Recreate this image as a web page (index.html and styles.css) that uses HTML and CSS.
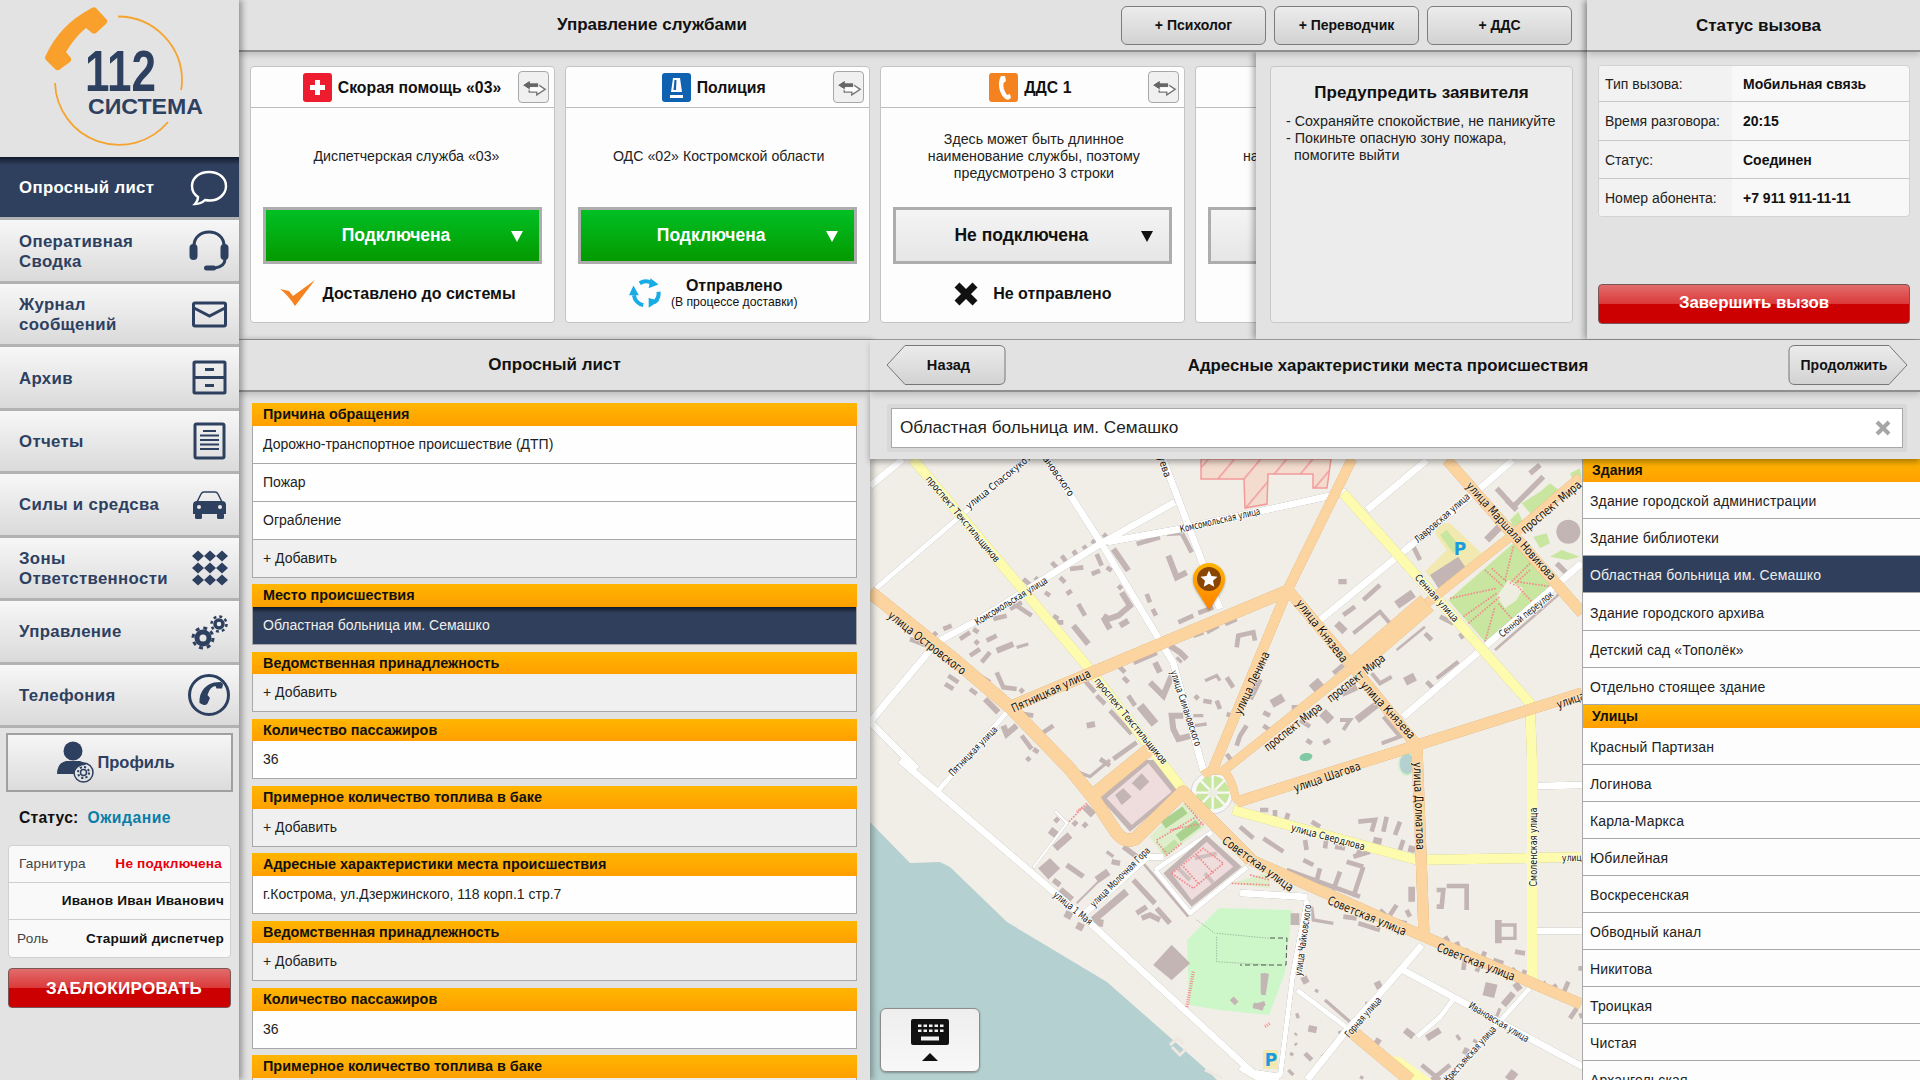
FILE: index.html
```html
<!DOCTYPE html>
<html lang="ru">
<head>
<meta charset="utf-8">
<title>Система 112</title>
<link rel="stylesheet" href="styles.css">
</head>
<body>
<aside class="sidebar">
  <div class="logo">
    <svg class="logo-svg" width="239" height="155" viewBox="0 0 239 155">
      <path class="logo-arc" d="M118 16.5A64 64 0 0 1 182 82Q182 86 181 90"/>
      <path class="logo-arc" d="M168 122A64 64 0 0 1 55 83"/>
      <path class="logo-phone" d="M96 8L107 20Q108 22 106 24L96 33Q94 34 92 33L86 28Q75 37 66 52L71 58Q72 60 70 62L59 70Q57 71 55 69L46 60Q44 58 46 55Q60 25 90 9Q94 6 96 8Z"/>
      <text class="logo-112" x="85" y="91" textLength="71" lengthAdjust="spacingAndGlyphs">112</text>
      <text class="logo-sys" x="88" y="114" textLength="115" lengthAdjust="spacingAndGlyphs">СИСТЕМА</text>
    </svg>
  </div>
  <nav class="nav">
    <a class="nav-item active"><span>Опросный лист</span>
      <svg class="nav-ic" viewBox="0 0 44 44"><path class="ic-white" d="M22 6C12 6 5 12 5 20C5 25 8 29 11 31C11 34 10 36 8 38C13 38 16 36 18 34C20 34.500 21 34.500 23 34.500C32 34.500 39 28 39 20C39 12 32 6 22 6Z"/></svg></a>
    <a class="nav-item"><span>Оперативная<br>Сводка</span>
      <svg class="nav-ic" viewBox="0 0 44 44"><path class="ic-line" d="M7 23V17C7 8 14 3 22 3C30 3 37 8 37 17V23"/><rect class="ic-fill" x="2.500" y="15" width="8" height="16" rx="4"/><rect class="ic-fill" x="33.500" y="15" width="8" height="16" rx="4"/><path class="ic-line" d="M38 30C38 36 34 38 28 39"/><rect class="ic-fill" x="17" y="36.500" width="12" height="5" rx="2.500"/></svg></a>
    <a class="nav-item"><span>Журнал<br>сообщений</span>
      <svg class="nav-ic" viewBox="0 0 44 44"><rect class="ic-line" x="6.500" y="10" width="32" height="23" rx="1.500"/><path class="ic-line" d="M7 15L22.500 23L38 15"/></svg></a>
    <a class="nav-item"><span>Архив</span>
      <svg class="nav-ic" viewBox="0 0 44 44"><rect class="ic-line" x="7" y="6" width="31" height="31" rx="1"/><path class="ic-line" d="M7 21.500H38M18 13.500H27M18 29.500H27"/></svg></a>
    <a class="nav-item"><span>Отчеты</span>
      <svg class="nav-ic" viewBox="0 0 44 44"><rect class="ic-line" x="8" y="5" width="29" height="34" rx="1.500"/><path class="ic-line thin" d="M16 12H29M13 16.500H32M13 21H32M13 25.500H32M13 30H32"/></svg></a>
    <a class="nav-item"><span>Силы и средсва</span>
      <svg class="nav-ic" viewBox="0 0 44 44"><path class="ic-thin" d="M10 19L14 11Q15 9 17 9H28Q30 9 31 11L35 19"/><path class="ic-fill" d="M6 22Q6 18 10 18H35Q39 18 39 22V31H6Z"/><rect class="ic-fill" x="8" y="30" width="7" height="6" rx="1.500"/><rect class="ic-fill" x="30" y="30" width="7" height="6" rx="1.500"/><circle class="ic-hole" cx="12" cy="24" r="2"/><circle class="ic-hole" cx="33" cy="24" r="2"/></svg></a>
    <a class="nav-item"><span>Зоны<br>Ответственности</span>
      <svg class="nav-ic" viewBox="0 0 44 44"><path class="ic-fill" d="M5 10l6-5.500 6 5.500-6 5.500zM17 10l6-5.500 6 5.500-6 5.500zM29 10l6-5.500 6 5.500-6 5.500zM5 22l6-5.500 6 5.500-6 5.500zM17 22l6-5.500 6 5.500-6 5.500zM29 22l6-5.500 6 5.500-6 5.500zM5 34l6-5.500 6 5.500-6 5.500zM17 34l6-5.500 6 5.500-6 5.500zM29 34l6-5.500 6 5.500-6 5.500z"/></svg></a>
    <a class="nav-item"><span>Управление</span>
      <svg class="nav-ic" viewBox="0 0 44 44"><circle class="ic-ring" cx="16" cy="28" r="6"/><circle class="ic-teeth" cx="16" cy="28" r="10" stroke-dasharray="3.900 3.950"/><circle class="ic-ring small" cx="32" cy="14" r="4"/><circle class="ic-teeth small" cx="32" cy="14" r="7.500" stroke-dasharray="2.950 2.950"/></svg></a>
    <a class="nav-item"><span>Телефония</span>
      <svg class="nav-ic wide" viewBox="0 0 44 44"><circle class="ic-line" cx="22" cy="22" r="19.500"/><path class="ic-fill" d="M27 9.500L33.500 9Q36 9.500 36 12L35 15.500L29.500 15.500L28.500 13Q23 13.500 20.500 22L23 25L20.500 30.500Q19 32.500 16.500 32L12.500 30Q12 21 17 15.500Q21 11 27 9.500Z"/></svg></a>
  </nav>
  <div class="side-bottom">
    <button class="profile-btn">
      <svg class="profile-ic" width="38" height="42" viewBox="0 0 38 42"><circle class="ic-fill" cx="17" cy="10" r="9.500"/><path class="ic-fill" d="M1 33Q1 22 10 20H24Q28 21 30 24Q20 24 18 33Z"/><circle class="ic-thin" cx="27.500" cy="31.500" r="9.500"/><circle class="ic-ring tiny" cx="27.500" cy="31.500" r="3"/><circle class="ic-teeth tiny" cx="27.500" cy="31.500" r="5.500" stroke-dasharray="2.150 2.150"/></svg>
      <span>Профиль</span>
    </button>
    <div class="user-status"><b>Статус:</b><span>Ожидание</span></div>
    <div class="info-table">
      <div class="info-row"><span class="info-l">Гарнитура</span><b class="red">Не подключена</b></div>
      <div class="info-row"><span class="info-l"></span><b>Иванов Иван Иванович</b></div>
      <div class="info-row"><span class="info-l r">Роль</span><b>Старший диспетчер</b></div>
    </div>
    <button class="block-btn gloss">ЗАБЛОКИРОВАТЬ</button>
  </div>
</aside>

<main class="main">
  <section class="top">
    <div class="services">
      <header class="head">
        <h2 class="head-title services-title">Управление службами</h2>
        <div class="head-btns">
          <button class="plus-btn">+ Психолог</button>
          <button class="plus-btn">+ Переводчик</button>
          <button class="plus-btn">+ ДДС</button>
        </div>
      </header>
      <div class="cards">
        <article class="card">
          <div class="card-head">
            <svg class="svc-ic" viewBox="0 0 29 29"><rect class="i-red" width="29" height="29" rx="3"/><path class="i-white" d="M12 7h5v5h5v5h-5v5h-5v-5H7v-5h5z"/></svg>
            <h3>Скорая помощь «03»</h3>
            <button class="swap"><svg viewBox="0 0 31 32" width="29" height="30"><path class="sw-o" d="M11 15.500H19V12.500L28 18.500L19 24.500V21.500H11Z"/><path class="sw-d" d="M3.500 14L12 8.500V11.500H21V16.500H12V19.500Z"/></svg></button>
          </div>
          <p class="card-desc first">Диспетчерская служба «03»</p>
          <button class="conn on"><span>Подключена</span><i class="tri"></i></button>
          <div class="deliv first">
            <svg class="d-check" width="36" height="27" viewBox="0 0 36 27"><path class="i-orange" d="M0 9L9 11L13 16L35 0L15 26Q8 15 0 9Z"/></svg>
            <b>Доставлено до системы</b>
          </div>
        </article>
        <article class="card">
          <div class="card-head shifted">
            <svg class="svc-ic" viewBox="0 0 29 29"><rect class="i-blue" width="29" height="29" rx="3"/><path class="i-white" d="M11 5H18L20 19H9ZM8 22H21V25H8Z"/><path class="i-blue" d="M12.500 7H14.500L14 17H11.500Z"/></svg>
            <h3>Полиция</h3>
            <button class="swap"><svg viewBox="0 0 31 32" width="29" height="30"><path class="sw-o" d="M11 15.500H19V12.500L28 18.500L19 24.500V21.500H11Z"/><path class="sw-d" d="M3.500 14L12 8.500V11.500H21V16.500H12V19.500Z"/></svg></button>
          </div>
          <p class="card-desc">ОДС «02» Костромской области</p>
          <button class="conn on"><span>Подключена</span><i class="tri"></i></button>
          <div class="deliv second">
            <svg width="34" height="31" viewBox="0 0 38 34"><path class="i-cyc" d="M12 5.500A13 13 0 0 1 25 5M33 15A13 13 0 0 1 28 27M16 30A13 13 0 0 1 5.500 19"/><path class="i-cyan" d="M24 0L33 7L22 11ZM34 25L22 33L22 22ZM0 19L5 8L11 19Z"/></svg>
            <div class="d-two"><b>Отправлено</b><small>(В процессе доставки)</small></div>
          </div>
        </article>
        <article class="card">
          <div class="card-head narrow">
            <svg class="svc-ic" viewBox="0 0 29 29"><rect class="i-orange" width="29" height="29" rx="3"/><path class="i-white" d="M12 3L16 3L17 8L14.500 10Q13.500 15 18 22L21 21L22 25L19 27Q14 26 11 18Q8.500 9 12 3Z"/></svg>
            <h3>ДДС 1</h3>
            <button class="swap"><svg viewBox="0 0 31 32" width="29" height="30"><path class="sw-o" d="M11 15.500H19V12.500L28 18.500L19 24.500V21.500H11Z"/><path class="sw-d" d="M3.500 14L12 8.500V11.500H21V16.500H12V19.500Z"/></svg></button>
          </div>
          <p class="card-desc">Здесь может быть длинное<br>наименование службы, поэтому<br>предусмотрено 3 строки</p>
          <button class="conn off"><span>Не подключена</span><i class="tri"></i></button>
          <div class="deliv">
            <svg width="26" height="26" viewBox="0 0 26 26"><path class="i-x" d="M4 4L22 22M22 4L4 22"/></svg>
            <b class="d-no">Не отправлено</b>
          </div>
        </article>
        <article class="card">
          <div class="card-head"></div>
          <p class="card-desc">Здесь может быть длинное<br>наименование службы, поэтому<br>предусмотрено 3 строки</p>
          <button class="conn off"></button>
        </article>
      </div>
      <aside class="warn">
        <div class="warn-box">
          <h3>Предупредить заявителя</h3>
          <p>- Сохраняйте спокойствие, не паникуйте<br>- Покиньте опасную зону пожара,<br><span class="warn-ind">помогите выйти</span></p>
        </div>
      </aside>
    </div>
    <div class="call">
      <header class="head call-head"><h2 class="head-title">Статус вызова</h2></header>
      <div class="call-body">
        <dl class="call-table">
          <dt>Тип вызова:</dt><dd>Мобильная связь</dd>
          <dt>Время разговора:</dt><dd>20:15</dd>
          <dt>Статус:</dt><dd>Соединен</dd>
          <dt>Номер абонента:</dt><dd>+7 911 911-11-11</dd>
        </dl>
        <button class="end-btn gloss">Завершить вызов</button>
      </div>
    </div>
  </section>

  <section class="bottom">
    <div class="survey">
      <header class="head"><h2 class="head-title">Опросный лист</h2></header>
      <div class="form">
        <div class="fs"><h4 class="orange">Причина обращения</h4><div class="fr">Дорожно-транспортное происшествие (ДТП)</div><div class="fr">Пожар</div><div class="fr">Ограбление</div><div class="fr add">+ Добавить</div></div>
        <div class="fs"><h4 class="orange">Место происшествия</h4><div class="fr sel">Областная больница им. Семашко</div></div>
        <div class="fs"><h4 class="orange">Ведомственная принадлежность</h4><div class="fr add">+ Добавить</div></div>
        <div class="fs"><h4 class="orange">Количество пассажиров</h4><div class="fr">36</div></div>
        <div class="fs"><h4 class="orange">Примерное количество топлива в баке</h4><div class="fr add">+ Добавить</div></div>
        <div class="fs"><h4 class="orange">Адресные характеристики места происшествия</h4><div class="fr">г.Кострома, ул.Дзержинского, 118 корп.1 стр.7</div></div>
        <div class="fs"><h4 class="orange">Ведомственная принадлежность</h4><div class="fr add">+ Добавить</div></div>
        <div class="fs"><h4 class="orange">Количество пассажиров</h4><div class="fr">36</div></div>
        <div class="fs"><h4 class="orange">Примерное количество топлива в баке</h4><div class="fr add">+ Добавить</div></div>
      </div>
    </div>
    <div class="address">
      <header class="head addr-head">
        <button class="nav-btn back">
          <svg class="btn-shape" width="120" height="40" viewBox="0 0 120 40"><defs><linearGradient id="bg1" x1="0" y1="0" x2="0" y2="1"><stop offset="0" stop-color="#ececec"/><stop offset="1" stop-color="#d2d2d2"/></linearGradient></defs><path d="M19 .5H113Q119 .5 119 6V34Q119 39.500 113 39.500H19L1 20Z" fill="url(#bg1)" stroke="#777"/></svg>
          <span>Назад</span>
        </button>
        <h2 class="head-title addr-title">Адресные характеристики места происшествия</h2>
        <button class="nav-btn next">
          <svg class="btn-shape" width="120" height="40" viewBox="0 0 120 40"><path d="M101 .5H7Q1 .5 1 6V34Q1 39.500 7 39.500H101L119 20Z" fill="url(#bg1)" stroke="#777"/></svg>
          <span>Продолжить</span>
        </button>
      </header>
      <div class="search-band">
        <div class="search"><span>Областная больница им. Семашко</span>
          <svg width="16" height="16" viewBox="0 0 16 16"><path class="i-clear" d="M2 2L14 14M14 2L2 14"/></svg>
        </div>
      </div>
      <div class="addr-body">
        <div class="map">
          <svg class="map-svg" width="712" height="621" viewBox="870 459 712 621">
            <defs>
              <pattern id="hatch" width="20" height="20" patternUnits="userSpaceOnUse" patternTransform="rotate(-50)"><rect width="20" height="20" class="h-bg"/><rect width="20" height="1.500" class="h-ln"/></pattern>
            </defs>
            <rect class="m-land" x="870" y="459" width="712" height="621"/>
            <path class="m-water" d="M870 822L910 863L940 862L950 867L1007 922L1107 982L1207 1070L1217 1080H870Z"/>
            <path class="m-pier" d="M1170 1045L1178 1038L1183 1044M1172 1047L1180 1055L1186 1049M1205 1070L1222 1078"/>
            <path class="m-hatch" d="M1201 459V479H1244L1245 508L1267 504L1268 474H1313V488H1327L1331 459Z"/>
            <path class="m-park" d="M1219 908L1292 910L1285 973L1269 1015L1219 1010L1189 1005L1187 940Z"/>
            <ellipse class="m-teal" cx="1306" cy="757" rx="6.500" ry="4" transform="rotate(-10 1306 757)"/>
            <ellipse class="m-pond" cx="1407" cy="764" rx="8" ry="11"/>

            <!-- upper-right park and parking -->
            <g transform="translate(1300 460) scale(.33333)">
              <path class="m-green" d="M445 420L640 250L770 375L555 545Z M665 130L720 95L750 70L790 100L745 140L700 170Z M700 230L740 220L750 250L720 265Z M630 180L655 155L670 190L640 200Z M750 290L785 270L840 290L800 300Z M810 40L840 25L845 50L820 65Z"/>
              <path class="m-centre" d="M590 410L625 360L670 385L650 420L615 445Z"/>
              <path class="m-dots" d="M450 415L590 385M490 470L590 400M505 490L600 410M555 545L585 440M635 475L595 430M700 430L650 375M755 380L650 365M690 310L630 370M640 260L615 360M555 330L610 380M575 325L620 365M690 330L640 375"/>
              <path class="m-pale" d="M375 335L440 270L405 220L420 190L450 190L545 280L425 385Z"/>
              <path class="m-green" d="M420 225L440 210L480 260L460 280Z"/>
              <path class="m-bld" d="M390 345L475 290L495 320L415 385Z"/>
              <circle class="m-bld" cx="805" cy="215" r="36"/>
            </g>

            <!-- buildings, upper left -->
            <g class="m-b" transform="translate(870 459) scale(.33333)">
              <path stroke-width="14" d="M800 255L870 235M890 225L935 222L965 280M545 310L560 325M575 290L590 310M610 275L620 290M640 260L650 272M665 245L680 255M700 225L710 235M680 285L695 320M710 325L725 335M665 345L690 335M600 330L640 325M570 355L585 370M460 360L490 385M495 355L510 370M605 395L590 405M540 410L525 400M625 435L645 470M745 380L755 390M830 405L840 430M848 450L858 470M925 490L970 470M985 462L1030 445M970 530L1000 520M1010 520L1045 500M1065 495L1100 480M1100 565L1105 530L1150 520L1155 545M1070 655L1090 685M1040 725L1050 750M975 710L985 720M1000 725L1025 730M1070 765L1085 770M120 540L170 560M190 530L200 520M220 510L245 500M270 540L300 520M310 510L325 520M315 545L325 555M350 545L380 530M300 590L330 570M335 610L360 580M225 675L250 690M235 650L265 670M285 615L310 640M310 640L360 670M380 640L400 685L440 690M450 690L460 700M300 690L320 705M460 765L490 770M455 830L485 870M490 870L505 880M520 820L550 800M470 895L480 905M645 665L675 700M680 710L705 735M720 755L785 825M775 710L795 740M760 655L775 670M745 620L765 640M370 480L410 470M440 440L485 470M420 450L455 430M560 490L580 490M550 470L565 480M690 900L720 920M800 850L730 900M1180 760L1200 770M1180 800L1210 820M1265 745L1290 745M1130 800L1110 830L1100 860M1070 885L1095 920"/>
              <path stroke-width="18" d="M730 270L775 335M895 290L920 355L950 340M755 400L780 440L745 470L715 480L700 470M700 475L720 510M750 500L775 485M790 610L860 580M900 560L930 580L950 600M855 610L870 640M840 670L880 710L905 650M1170 660L1140 720M940 770L905 770L910 810L925 840L965 830M380 575L430 555M345 720L385 760M400 800L410 825L440 800M650 800L675 795M610 500L655 555"/>
              <path stroke-width="26" d="M1205 735L1240 715M810 740L855 795"/>
              <path stroke-width="10" d="M440 565L475 555M1005 665L1040 650L1050 665M970 770L1000 770M975 800L1010 795M920 595L935 610"/>
            </g>

            <!-- buildings, lower left -->
            <g class="m-b" transform="translate(870 760) scale(.33333)">
              <path stroke-width="10" d="M620 35L660 50L720 0M710 275L730 290"/>
              <path stroke-width="6" d="M620 430L690 360"/>
              <path stroke-width="8" d="M820 310L955 470"/>
              <path stroke-width="16" d="M555 175L565 185M610 185L620 195M640 190L650 200M760 260L800 290M725 305L750 310M550 360L570 375M790 360L855 430M800 460L830 440M815 475L840 465L870 480M860 445L900 490M590 315L640 350"/>
              <path stroke-width="22" d="M645 140L670 165M540 210L560 225M555 265L600 225M680 360L715 335M570 390L605 420M585 460L605 470M620 495L640 505M670 480L770 395M665 485L700 490"/>
              <path class="m-bld" d="M505 325L540 295L570 325L535 358ZM850 615L905 555L960 610L905 660Z"/>
              <path stroke-width="16" d="M1180 640L1180 700M1150 735L1180 745M1085 715L1100 730"/>
            </g>

            <!-- buildings, lower right -->
            <g class="m-b" transform="translate(1240 760) scale(.33333)">
              <path stroke-width="14" d="M355 185L405 180L395 215M440 170L430 215M480 185L465 225M490 240L480 270M0 200L40 235M70 235L130 275M60 150L85 150M105 150L105 175M145 160L135 190M215 185L240 200M195 240L200 270M260 230L255 265M285 260L315 265M340 290L390 275M360 270L350 290M190 300L220 315M140 330L360 410M370 320L340 410M320 305L370 320M240 325L225 380M300 335L280 390M620 378L680 378L680 450M590 390L610 390L605 440L590 440M615 530L625 545M650 545L655 560M680 565L670 630M735 575L710 635M760 600L790 610M825 575L855 580M855 630L850 645M815 625L830 640M950 675L930 690M985 665L970 700M1015 625L1035 625M1010 745L990 775M545 915L600 960M575 960L630 915M310 470L350 475M355 490L420 510M420 450L440 470M450 465L470 435M500 450L510 470M470 485L500 490"/>
              <path stroke-width="20" d="M400 240L425 245M505 265L525 270M515 380L515 425M775 480L775 550M820 700L790 735M825 670L840 690M190 650L200 670M205 805L230 810M670 870L690 880M405 840L420 850M495 810L520 830M560 835L600 810M375 735L400 735M410 665L420 685"/>
              <path stroke-width="10" d="M775 495L825 495L825 535L775 535M215 440L220 480L280 490M255 720L335 790M225 690L235 695M150 880L160 885M145 930L160 945M245 890L260 880M280 850L295 835M295 820L305 815M650 825L660 840M700 840L715 850M170 760L175 775M170 820L165 825M165 850L170 855M780 745L770 770M360 950L370 955M910 665L915 670M1020 760L1025 775"/>
              <path stroke-width="36" d="M755 670L745 710"/>
              <path stroke-width="26" d="M165 460L165 495M825 935L805 960"/>
              <path stroke-width="14" d="M80 640L70 705M40 740L75 730M195 880L215 900"/>
            </g>

            <!-- buildings, upper right -->
            <g class="m-b" transform="translate(1300 460) scale(.33333)">
              <path stroke-width="16" d="M590 85L640 140L690 90L730 50M720 15L690 40M650 150L620 120M770 310L800 340M115 365L140 365"/>
              <path stroke-width="22" d="M560 240L600 200M155 600L190 570M170 780L235 730M125 700L170 680M110 490L135 515"/>
              <path stroke-width="14" d="M190 420L240 375M130 465L165 440M375 520L395 540M420 470L460 490M480 520L490 535M100 640L130 615M380 665L400 685M20 840L35 850M70 850L90 840M0 780L30 800M340 260L360 300"/>
              <path stroke-width="26" d="M290 435L340 400M315 665L345 650"/>
              <path stroke-width="12" d="M160 520L240 455L270 490M215 640L240 670L275 650M410 655L475 605M120 780L150 780L130 810M245 850L300 830L250 770"/>
              <path stroke-width="8" d="M290 570L375 500M585 570L780 400"/>
              <path stroke-width="36" d="M40 665L70 700M90 760L70 780"/>
            </g>

            <!-- white streets -->
            <g id="wr">
              <path stroke-width="7" d="M1347 492L1180 529L1107 542M1175 502L1100 544L980 619L937 642L870 722L917 769M1047 459L1103 546L1163 646L1173 662L1203 769L1205 775M1163 459L1220 609M1403 717L1582 563M1320 620L1470 497L1513 460M1367 510L1427 460M1403 970L1583 1067M1422 945L1377 997L1347 1030L1307 1080M1240 893L1307 897M1538 786L1582 785M1537 931L1582 931M1083 915L1147 857L1163 857M900 760L1090 923L1253 1073L1280 1077M870 486L903 459M1240 1067L1257 1077L1277 1077"/>
              <path stroke-width="5" d="M873 591L1027 459M1007 712L937 792M1307 900L1293 973L1280 1077M1530 988L1447 1080M1297 990L1350 1030M1453 1000L1440 1017L1417 1037M1155 870L1190 913L1247 867M1155 870L1212 832"/>
              <path stroke-width="2.500" d="M1033 868L1067 823L1055 811"/>
            </g>
            <circle class="m-plaza" cx="1212" cy="793" r="21"/>
            <g transform="translate(870 760) scale(.33333)">
              <circle class="m-green" cx="1028" cy="98" r="50"/>
              <path class="m-spoke" d="M985 55L1070 140M1070 55L985 140M1028 40V155M970 98H1086"/>
              <circle class="m-centre" cx="1028" cy="98" r="15"/>
              <!-- plaza green block -->
              <path class="m-pale2" d="M838 230L945 125L1005 200L885 290Z"/>
              <path class="m-g2" stroke-width="26" d="M880 195L945 150M925 235L985 190"/>
              <path class="m-g3" stroke-width="20" d="M880 280L920 245"/>
              <path class="m-dots" d="M860 240L980 170M900 210L1000 190M860 245L890 280M945 130L1000 195M935 250L885 290"/>
              <!-- pink block -->
              <path class="m-bld" d="M880 340L1010 225L1115 320L965 440Z"/>
              <path class="m-pink" d="M905 340L1010 245L1090 320L965 420Z"/>
              <path class="m-in" stroke-width="12" d="M925 325L960 360M975 295L1040 280M1005 340L1030 370"/>
              <path class="m-dots" d="M905 340L1000 265L1060 310L970 385ZM940 320L985 370M980 285L1030 340"/>
              <path class="m-pale2" d="M1085 370L1200 335V385L1120 375Z"/>
              <path class="m-dots" d="M1085 370L1200 375M1140 345L1200 360"/>
              <!-- pink square -->
              <path class="m-bld" d="M690 115L820 0H870L925 95L780 215Z"/>
              <path class="m-pink" d="M710 115L835 10L905 95L785 195Z"/>
              <path class="m-bld" d="M735 105L760 85L785 110L755 135ZM785 70L815 40L838 65L810 92Z"/>
              <!-- stairs -->
              <path class="m-stair" stroke-width="10" stroke-dasharray="3 4" d="M970 635L950 745M1185 800L1200 790"/>
              <path class="m-stair" stroke-width="7" stroke-dasharray="3 3" d="M620 155L640 140"/>
              <path class="m-dots" d="M597 185L650 130"/>
              <path class="m-dash" d="M980 480L1035 520M1040 520L1200 535M1040 530V605L1200 615"/>
            </g>
            <path class="m-dash" d="M1270 938L1287 938L1286 965L1240 965"/>

            <!-- yellow streets -->
            <g id="yr">
              <path stroke-width="10" d="M913 459L1087 666L1183 790M1343 493L1530 703L1532 760L1532 980M1233 810L1417 860L1582 857"/>
            </g>
            <path class="m-yfill" d="M1386 1056L1400 1057L1432 1080H1412Z"/>

            <!-- orange streets -->
            <g id="or">
              <path stroke-width="13" d="M870 592L950 656L1010 707L1070 769L1095 800L1116 832Q1124 843 1135 839L1183 792L1251 860M1093 795L1152 747M1350 1030L1410 1080"/>
              <path stroke-width="12" d="M1010 707L1287 591"/>
              <path stroke-width="10" d="M1287 591L1352 459M1287 591L1213 769"/>
              <path stroke-width="11" d="M1447 460L1582 613M1288 590L1353 667L1410 737L1417 746L1424 935M1237 802L1582 693M1251 860L1416 933L1581 1004"/>
              <path stroke-width="9" d="M1580 477L1510 537L1427 603M1353 667L1223 771"/>
              <path stroke-width="20" d="M1427 603L1353 667"/>
              <path stroke-width="8" d="M1203 775Q1212 768 1225 772Q1232 780 1235 795Q1236 802 1243 800"/>
            </g>

            <g class="labels">
              <text transform="translate(963 519) rotate(50)" textLength="109" lengthAdjust="spacingAndGlyphs">проспект Текстильщиков</text>
              <text class="s" transform="translate(967 507) rotate(-39)" textLength="105" lengthAdjust="spacingAndGlyphs">улица Спасокукотского</text>
              <text class="e" transform="translate(1072 495) rotate(55)" textLength="95" lengthAdjust="spacingAndGlyphs">улица Симановского</text>
              <text class="e" transform="translate(1168 477) rotate(72)" textLength="60" lengthAdjust="spacingAndGlyphs">улица Зуева</text>
              <text transform="translate(1220 520) rotate(-13)" textLength="82" lengthAdjust="spacingAndGlyphs">Комсомольская улица</text>
              <text transform="translate(1011 601) rotate(-31.500)" textLength="83" lengthAdjust="spacingAndGlyphs">Комсомольская улица</text>
              <text class="b" transform="translate(927 643) rotate(38)" textLength="95" lengthAdjust="spacingAndGlyphs">улица Островского</text>
              <text class="b" transform="translate(1051 691) rotate(-25)" textLength="86" lengthAdjust="spacingAndGlyphs">Пятницкая улица</text>
              <text transform="translate(1131 721) rotate(50.500)" textLength="108" lengthAdjust="spacingAndGlyphs">проспект Текстильщиков</text>
              <text transform="translate(1186 708) rotate(71.500)" textLength="79" lengthAdjust="spacingAndGlyphs">улица Симановского</text>
              <text class="b" transform="translate(1252 683) rotate(-65)" textLength="68" lengthAdjust="spacingAndGlyphs">улица Ленина</text>
              <text class="b" transform="translate(1293 727) rotate(-38)" textLength="70" lengthAdjust="spacingAndGlyphs">проспект Мира</text>
              <text class="b" transform="translate(1356 678) rotate(-38)" textLength="70" lengthAdjust="spacingAndGlyphs">проспект Мира</text>
              <text class="b" transform="translate(1322 631) rotate(52)" textLength="76" lengthAdjust="spacingAndGlyphs">улица Князева</text>
              <text class="b" transform="translate(1388 710) rotate(47)" textLength="74" lengthAdjust="spacingAndGlyphs">улица Князева</text>
              <text transform="translate(1437 598) rotate(48)" textLength="60" lengthAdjust="spacingAndGlyphs">Сенная улица</text>
              <text transform="translate(1442 518) rotate(-41)" textLength="70" lengthAdjust="spacingAndGlyphs">Лавровская улица</text>
              <text class="b" transform="translate(1511 531) rotate(48)" textLength="127" lengthAdjust="spacingAndGlyphs">улица Маршала Новикова</text>
              <text class="b" transform="translate(1551 507) rotate(-40)" textLength="75" lengthAdjust="spacingAndGlyphs">проспект Мира</text>
              <text transform="translate(1526 614) rotate(-39)" textLength="67" lengthAdjust="spacingAndGlyphs">Сенной переулок</text>
              <text class="b s" transform="translate(1557 705) rotate(-19)" textLength="70" lengthAdjust="spacingAndGlyphs">улица Шагова</text>
              <text class="b" transform="translate(1327 777) rotate(-19)" textLength="70" lengthAdjust="spacingAndGlyphs">улица Шагова</text>
              <text class="b" transform="translate(1419 806) rotate(88)" textLength="88" lengthAdjust="spacingAndGlyphs">улица Долматова</text>
              <text transform="translate(1328 837) rotate(15)" textLength="76" lengthAdjust="spacingAndGlyphs">улица Свердлова</text>
              <text transform="translate(1533 847) rotate(-90)" textLength="79" lengthAdjust="spacingAndGlyphs">Смоленская улица</text>
              <text class="s" transform="translate(1562 858) rotate(-2)" textLength="70" lengthAdjust="spacingAndGlyphs">улица Свердлова</text>
              <text class="b" transform="translate(1258 864) rotate(36)" textLength="85" lengthAdjust="spacingAndGlyphs">Советская улица</text>
              <text class="b" transform="translate(1367 916) rotate(22.500)" textLength="84" lengthAdjust="spacingAndGlyphs">Советская улица</text>
              <text class="b" transform="translate(1476 962) rotate(21.500)" textLength="83" lengthAdjust="spacingAndGlyphs">Советская улица</text>
              <text transform="translate(1303 940) rotate(-82)" textLength="72" lengthAdjust="spacingAndGlyphs">улица Чайковского</text>
              <text transform="translate(1363 1017) rotate(-49)" textLength="50" lengthAdjust="spacingAndGlyphs">Горная улица</text>
              <text transform="translate(1499 1022) rotate(31)" textLength="68" lengthAdjust="spacingAndGlyphs">Ивановская улица</text>
              <text transform="translate(1470 1054) rotate(-48)" textLength="72" lengthAdjust="spacingAndGlyphs">Крестьянская улица</text>
              <text transform="translate(1073 908) rotate(39)" textLength="47" lengthAdjust="spacingAndGlyphs">улица 1 Мая</text>
              <text transform="translate(1120 877) rotate(-45)" textLength="80" lengthAdjust="spacingAndGlyphs">улица Молочная Гора</text>
              <text transform="translate(973 751) rotate(-46)" textLength="65" lengthAdjust="spacingAndGlyphs">Пятницкая улица</text>
            </g>
            <rect class="m-parkbg" x="1263" y="1050" width="15" height="19"/>
            <text class="m-p" x="1271" y="1066">P</text>
            <text class="m-p" x="1460" y="555">P</text>

            <!-- pin -->
            <g class="pin">
              <defs><linearGradient id="pinG" x1="0" y1="0" x2="0" y2="1"><stop offset="0" stop-color="#ffb400"/><stop offset="1" stop-color="#ff8200"/></linearGradient></defs>
              <path fill="url(#pinG)" d="M1209 610L1197 591Q1193 585 1193 579A16 16 0 0 1 1225 579Q1225 585 1221 591Z"/>
              <circle class="pin-in" cx="1209" cy="579" r="12"/>
              <path class="i-white" d="M1209 570.500L1211.500 576L1217.500 576.800L1213 580.800L1214.300 586.800L1209 583.800L1203.700 586.800L1205 580.800L1200.500 576.800L1206.500 576Z"/>
            </g>
          </svg>
          <button class="kbd-btn">
            <svg width="40" height="42" viewBox="0 0 40 42"><rect class="kb-b" x="1" y="0" width="38" height="26" rx="2"/><path class="kb-k" d="M8 5.500H11.500V8H8ZM13.500 5.500H17V8H13.500ZM19 5.500H22.500V8H19ZM24.500 5.500H28V8H24.500ZM30 5.500H33.500V8H30ZM8 10.500H11.500V13H8ZM13.500 10.500H17V13H13.500ZM19 10.500H22.500V13H19ZM24.500 10.500H28V13H24.500ZM30 10.500H33.500V13H30ZM11 17.500H29V21.500H11Z"/><path class="kb-t" d="M12 42L20 34L28 42Z"/></svg>
          </button>
        </div>
        <div class="list">
          <h4 class="orange">Здания</h4>
          <div class="li bld">Здание городской администрации</div>
          <div class="li bld">Здание библиотеки</div>
          <div class="li bld sel">Областная больница им. Семашко</div>
          <div class="li bld">Здание городского архива</div>
          <div class="li bld">Детский сад «Тополёк»</div>
          <div class="li bld">Отдельно стоящее здание</div>
          <h4 class="orange">Улицы</h4>
          <div class="li">Красный Партизан</div>
          <div class="li">Логинова</div>
          <div class="li">Карла-Маркса</div>
          <div class="li">Юбилейная</div>
          <div class="li">Воскресенская</div>
          <div class="li">Обводный канал</div>
          <div class="li">Никитова</div>
          <div class="li">Троицкая</div>
          <div class="li">Чистая</div>
          <div class="li">Архангельская</div>
        </div>
      </div>
    </div>
  </section>
</main>
</body>
</html>
```
FILE: styles.css
```css
* { box-sizing: border-box; }
html, body { margin: 0; padding: 0; }
body {
  width: 1920px; height: 1080px; overflow: hidden;
  display: flex;
  background: #e2e2e2;
  font-family: "Liberation Sans", Arial, sans-serif;
  color: #111;
}
button { font-family: inherit; cursor: pointer; padding: 0; }
h2, h3, h4, p, dl, dd, dt { margin: 0; }

/* Sidebar */
.sidebar { width: 239px; flex: none; height: 1080px; background: #e3e3e3; position: relative; z-index: 5; box-shadow: 3px 0 6px rgba(0,0,0,.35); display: flex; flex-direction: column; }
.logo { height: 157px; flex: none; }
.logo-svg { display: block; }
.logo-arc { fill: none; stroke: #f5a430; stroke-width: 1.8; }
.logo-phone { fill: #f9a02c; }
.logo-112 { font: bold 58px "Liberation Sans", sans-serif; fill: #2e4060; }
.logo-sys { font: bold 21.500px "Liberation Sans", sans-serif; fill: #2e4060; }

.nav { display: grid; grid-template-rows: repeat(9, 63.440px); flex: none; }
.nav-item { display: flex; align-items: center; justify-content: space-between; padding: 1px 8px 0 19px; background: linear-gradient(#f7f7f7, #dadada); border-bottom: 3px solid #b2b2b2; color: #2e4060; font-weight: bold; font-size: 16.800px; line-height: 20px; letter-spacing: .35px; }
.nav-item span { padding-top: 1px; }
.nav-item.active { background: linear-gradient(#131c2c 0, #2f405e 8px); color: #fff; border-bottom-color: #b2b2b2; }
.nav-ic { width: 44px; height: 44px; flex: none; }
.ic-white { fill: none; stroke: #fff; stroke-width: 2.400; }
.ic-line { fill: none; stroke: #2e4060; stroke-width: 3; }
.ic-line.thin { stroke-width: 2; }
.ic-thin { fill: none; stroke: #2e4060; stroke-width: 1.500; }
.ic-fill { fill: #2e4060; }
.ic-hole { fill: #e9e9e9; }
.ic-ring { fill: none; stroke: #2e4060; stroke-width: 5; }
.ic-ring.small { stroke-width: 3.500; }
.ic-ring.tiny { stroke-width: 1.500; }
.ic-teeth { fill: none; stroke: #2e4060; stroke-width: 3; }
.ic-teeth.small { stroke-width: 2.500; }
.ic-teeth.tiny { stroke-width: 2; }

.side-bottom { flex: 1; padding: 5px 6px 0; display: flex; flex-direction: column; }
.profile-btn { height: 59px; flex: none; display: flex; align-items: center; justify-content: center; gap: 3px; border: 2px solid #a0a0a0; background: linear-gradient(#f6f6f6, #dcdcdc); color: #2e4060; font-size: 16.500px; font-weight: bold; padding-right: 8px; }
.user-status { font-size: 15.700px; height: 53px; flex: none; display: flex; gap: 9px; padding-left: 13px; align-items: center; letter-spacing: .2px; }
.user-status span { color: #0a7ea8; font-weight: bold; letter-spacing: .5px; }
.info-table { margin: 0 2px; background: #f9f9f9; border: 1px solid #d0d0d0; border-radius: 4px; height: 113px; display: grid; grid-template-rows: repeat(3, 1fr); flex: none; }
.info-row { display: flex; align-items: center; justify-content: space-between; padding: 0 6px 0 10px; font-size: 13.600px; border-bottom: 1px solid #cfcfcf; }
.info-row:first-child { padding-right: 8px; }
.info-row:last-child { border-bottom: 0; }
.info-row b { letter-spacing: .2px; }
.info-l { color: #444; letter-spacing: .2px; }
.info-l.r { margin-left: -2px; }
.red { color: #e8000c; }
.gloss { background: linear-gradient(#e26c6c 0, #dc3a3a 49%, #cc0000 50%, #cc0000 100%); color: #fff; font-weight: bold; border: 1px solid #7a5555; border-radius: 4px; }
.block-btn { margin: 10px 2px 0; height: 40px; flex: none; font-size: 17px; letter-spacing: .3px; padding: 2px 0 0 9px; }

/* Main */
.main { flex: 1; height: 1080px; display: flex; flex-direction: column; min-width: 0; }
.top { height: 340px; flex: none; display: flex; border-bottom: 1px solid #9c9c9c; position: relative; z-index: 1; }
.services { flex: 1; min-width: 0; position: relative; overflow: hidden; background: #e2e2e2; }
.head { height: 52px; flex: none; background: #e2e2e2; border-bottom: 2px solid #8f8f8f; display: flex; align-items: center; justify-content: center; position: relative; z-index: 2; box-shadow: 0 3px 6px rgba(0,0,0,.16); }
.head-title { font-size: 17px; font-weight: bold; text-align: center; }
.services-title { flex: 1; padding-right: 56px; }
.call-head { padding-left: 10px; padding-top: 1px; }
.head-btns { display: flex; gap: 8px; padding-right: 15px; flex: none; }
.plus-btn { width: 145px; height: 39px; background: linear-gradient(#ececec, #d2d2d2); border: 1px solid #7c7c7c; border-radius: 6px; font-size: 14px; font-weight: bold; color: #111; }

.cards { display: flex; gap: 10.200px; padding: 14px 0 0 10.500px; }
.card { flex: none; width: 305px; height: 257px; background: #fdfdfd; border: 1px solid #c4c4c4; border-radius: 4px; display: flex; flex-direction: column; }
.card-head { height: 41px; flex: none; border-bottom: 1px solid #bdbdbd; display: flex; align-items: center; justify-content: center; gap: 6px; position: relative; padding-top: 1px; }
.card-head.shifted { padding-right: 7px; }
.card-head.narrow { padding-right: 4px; }
.card-head .svc-ic { margin-top: -1px; }
.card-head h3 { font-size: 15.800px; font-weight: bold; }
.svc-ic { width: 29px; height: 29px; flex: none; }
.i-red { fill: #ed1c2e; } .i-white { fill: #fff; } .i-blue { fill: #0f62b0; } .i-orange { fill: #f58220; }
.i-cyan { fill: #18ace6; } .i-cyc { fill: none; stroke: #18ace6; stroke-width: 4.500; }
.i-x { fill: none; stroke: #111; stroke-width: 7; }
.i-clear { fill: none; stroke: #a6a6a6; stroke-width: 4; }
.swap { position: absolute; right: 5px; top: 4px; width: 31px; height: 32px; background: #f0f0f0; border: 1px solid #a8a8a8; border-radius: 4px; display: flex; align-items: center; justify-content: center; }
.sw-o { fill: #fff; stroke: #777; stroke-width: 1.500; }
.sw-d { fill: #666; stroke: #fff; stroke-width: 1; }
.card-desc { height: 99px; flex: none; display: flex; align-items: center; justify-content: center; text-align: center; font-size: 14.200px; line-height: 17px; padding: 0 0 2px 3px; color: #222; }
.card-desc.first { padding-left: 9px; }
.conn { height: 57px; flex: none; margin: 0 12px; border: 3px solid #adadad; display: flex; align-items: center; justify-content: center; font-size: 17.500px; font-weight: bold; position: relative; padding-right: 22px; }
.conn.on { background: linear-gradient(#00c024, #049a00); color: #fff; padding-right: 12px; }
.conn.off { background: linear-gradient(#f4f4f4, #e6e6e6); color: #111; }
.tri { position: absolute; right: 16px; top: 21px; width: 0; height: 0; border-left: 6px solid transparent; border-right: 6px solid transparent; border-top: 11px solid currentColor; }
.deliv { flex: 1; display: flex; align-items: center; justify-content: center; gap: 6px; font-size: 16px; padding-top: 1px; }
.deliv.first { padding-right: 8px; }
.deliv.second { padding: 1px 8px 1px 0; gap: 8px; }
.d-two { display: flex; flex-direction: column; align-items: center; }
.d-two small { font-size: 12.200px; font-weight: normal; }
.d-no { margin-left: 8px; }

.warn { position: absolute; left: 1017px; top: 52px; width: 331px; bottom: 0; background: #e2e2e2; box-shadow: -3px 0 6px rgba(0,0,0,.3); padding: 14px 14px 0; z-index: 1; }
.warn-box { height: 257px; background: #ececec; border: 1px solid #c8c8c8; border-radius: 4px; padding: 16px 0 0 15px; }
.warn-box h3 { font-size: 17px; text-align: center; padding-right: 15px; }
.warn-box p { font-size: 14.300px; line-height: 17px; margin-top: 10px; color: #222; white-space: nowrap; }
.warn-ind { padding-left: 8px; }

.call { width: 333px; flex: none; background: #e2e2e2; display: flex; flex-direction: column; position: relative; z-index: 2; box-shadow: -3px 0 6px rgba(0,0,0,.3); }
.call-body { padding: 13px 10px 0 11px; flex: 1; display: flex; flex-direction: column; }
.call-table { display: grid; grid-template-columns: 133px 1fr; grid-template-rows: 36px 39px 38px 37px; background: #f8f8f8; border: 1px solid #d2d2d2; border-radius: 4px; font-size: 14px; overflow: hidden; }
.call-table dt, .call-table dd { display: flex; align-items: center; border-bottom: 1px solid #c8c8c8; }
.call-table dt { background: #f2f2f2; padding-left: 6px; color: #222; }
.call-table dd { padding-left: 11px; font-weight: bold; color: #111; }
.call-table dt:nth-last-child(2), .call-table dd:last-child { border-bottom: 0; }
.end-btn { margin-top: 67px; height: 40px; font-size: 16.800px; flex: none; padding-bottom: 2px; }

.bottom { flex: 1; display: flex; min-height: 0; }
.survey { width: 631px; flex: none; display: flex; flex-direction: column; background: #e2e2e2; position: relative; z-index: 3; box-shadow: 3px 0 6px rgba(0,0,0,.3); overflow: hidden; }
.form { padding: 11px 13px 0; display: flex; flex-direction: column; gap: 6.800px; }
.orange { font-size: 14.400px; font-weight: bold; height: 22.500px; flex: none; line-height: 22px; padding-left: 11px; background: linear-gradient(#ffb600, #ff9f00); color: #111; }
.fs { display: flex; flex-direction: column; flex: none; }
.fr { height: 38px; flex: none; display: flex; align-items: center; padding: 0 0 1px 10px; background: #fefefe; border: 1px solid #a8a8a8; border-top: 0; font-size: 14px; color: #222; }
.fr.add { background: #f0f0f0; }
.fr.sel { background: linear-gradient(#10182a 0, #30405c 6px); color: #eee; }

.address { flex: 1; min-width: 0; display: flex; flex-direction: column; }
.addr-head { justify-content: space-between; padding: 0 12px 0 16px; z-index: 4; }
.addr-title { flex: 1; padding: 1px 18px 0 0; font-size: 16.800px; }
.nav-btn { position: relative; width: 120px; height: 40px; flex: none; border: 0; background: none; font-size: 14.600px; font-weight: bold; color: #111; }
.btn-shape { position: absolute; left: 0; top: 0; }
.nav-btn span { position: relative; }
.back span { padding-left: 5px; }
.next { font-size: 14px; }
.next span { padding-right: 8px; }
.search-band { height: 67px; flex: none; background: #e2e2e2; padding: 12px 13px 7px 17px; position: relative; z-index: 3; box-shadow: 0 3px 6px rgba(0,0,0,.35); }
.search { height: 48px; background: #fff; border: 4px solid #d8d8d8; outline: 0; border-radius: 3px; display: flex; align-items: center; justify-content: space-between; padding: 0 12px 1px 9px; font-size: 17.200px; color: #222; box-shadow: inset 0 0 0 1px #a8a8a8; }
.addr-body { flex: 1; display: flex; min-height: 0; }
.map { flex: 1; position: relative; overflow: hidden; min-width: 0; }
.map-svg { display: block; }
.list { width: 338px; flex: none; background: #fdfdfd; border-left: 1px solid #a8a8a8; position: relative; z-index: 1; overflow: hidden; }
.list .orange { padding-left: 9px; font-size: 14px; }
.li { height: 37px; display: flex; align-items: center; padding: 2px 0 0 7px; font-size: 14px; border-bottom: 1px solid #a8a8a8; color: #222; background: #fdfdfd; letter-spacing: .15px; }
.li.bld { height: 37.300px; }
.li.sel { background: #30405c; color: #eee; }
.kbd-btn { position: absolute; left: 10px; top: 549px; width: 100px; height: 64px; background: linear-gradient(#eeeeee, #f8f8f8); border: 1px solid #8c8c8c; border-radius: 6px; box-shadow: 0 1px 2px rgba(0,0,0,.3); display: flex; align-items: center; justify-content: center; }
.kb-b { fill: #111; }
.kb-k { fill: #f2f2f2; }
.kb-t { fill: #111; }

/* Map */
.m-land { fill: #f1eee8; }
.m-water { fill: #b5d0d0; }
.m-pier { fill: none; stroke: #eee8e0; stroke-width: 3; }
.m-hatch { fill: url(#hatch); stroke: #f29a9a; stroke-width: 1.500; }
.h-bg { fill: #f3dccd; } .h-ln { fill: #f29a9a; }
.m-park { fill: #cdf7c9; }
.m-teal { fill: #7fc9a5; }
.m-pond { fill: #b5d0d0; stroke: #cdf0c8; stroke-width: 1.500; }
.m-green { fill: #c8e6a0; }
.m-centre { fill: #eeeee0; }
.m-dots { fill: none; stroke: #f28a8a; stroke-width: 5; stroke-dasharray: 5 4; }
.m-pale { fill: #f2e9b0; }
.m-pale2 { fill: #deeecb; }
.m-g2 { fill: none; stroke: #abd18f; }
.m-g3 { fill: none; stroke: #c3e0a6; }
.m-bld { fill: #c4b5b5; }
.m-in { fill: none; stroke: #d0bfbf; }
.m-b { fill: none; stroke: #c4b5b5; }
.m-pink { fill: #efdcdc; }
.m-plaza { fill: #f8f8f8; stroke: #d6d6d6; }
.m-spoke { fill: none; stroke: #f8f8f8; stroke-width: 7; }
.m-stair { fill: none; stroke: #f58a8a; }
.m-dash { fill: none; stroke: #555; stroke-width: 1; stroke-dasharray: 5 3; }
.m-yfill { fill: #fdfbae; }
#wr { fill: none; stroke: #fff; stroke-linejoin: round; filter: drop-shadow(0 0 .6px #8c8c8c); }
#yr { fill: none; stroke: #fdfbae; stroke-linejoin: round; filter: drop-shadow(0 0 .6px #b0b090); }
#or { fill: none; stroke: #fcd49f; stroke-linejoin: round; stroke-linecap: butt; filter: drop-shadow(0 0 .5px #c69a68); }
.labels text { font: 10px "DejaVu Sans", sans-serif; fill: #111; text-anchor: middle; dominant-baseline: central; paint-order: stroke; stroke: rgba(255,255,255,.75); stroke-width: 2px; }
.labels text.b { font-size: 12px; stroke: rgba(255,235,205,.7); }
.labels text.s { text-anchor: start; }
.labels text.e { text-anchor: end; }
.m-parkbg { fill: #f2e9b0; }
.m-p { font: bold 17px "DejaVu Sans", sans-serif; fill: #1a9ae0; text-anchor: middle; }
.pin { filter: drop-shadow(0 1px 1px rgba(0,0,0,.3)); }
.pin-in { fill: #8a4500; }
```
